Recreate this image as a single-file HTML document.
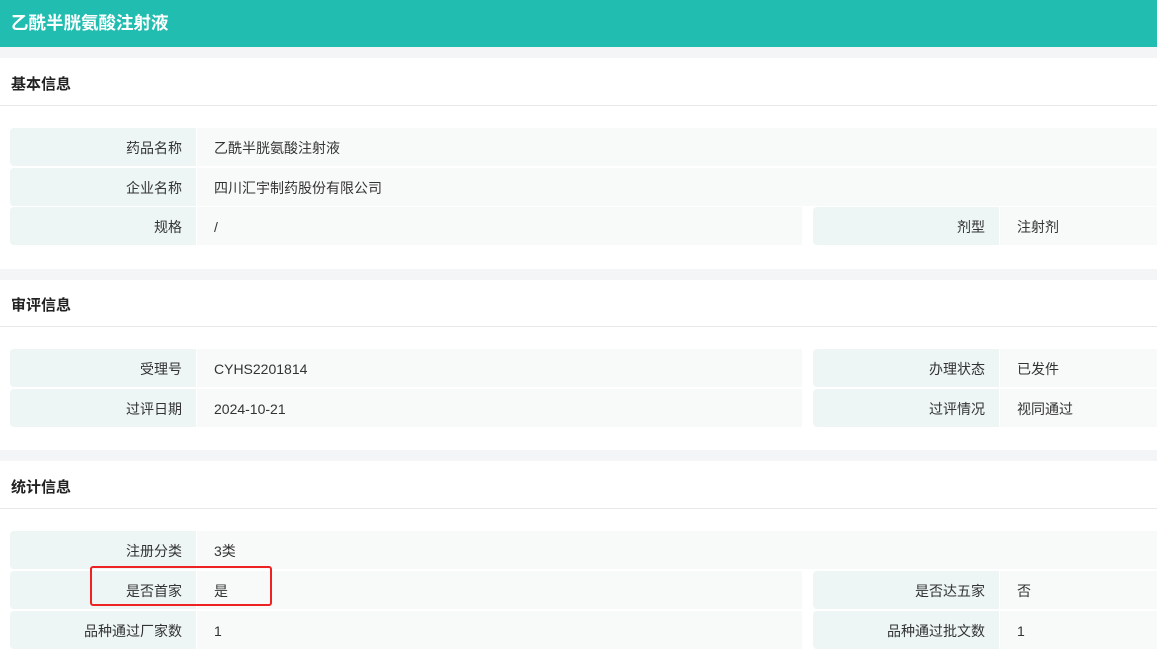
<!DOCTYPE html>
<html><head><meta charset="utf-8"><style>
*{margin:0;padding:0;box-sizing:border-box}
body{width:1157px;height:666px;overflow:hidden;background:#fff;font-family:"Liberation Sans","Noto Sans CJK SC",sans-serif;color:#333;position:relative}
.a{position:absolute}
.hdr{left:0;top:0;width:1157px;height:47px;background:#20bdb0;color:#fff;font-size:17.5px;font-weight:bold;line-height:47px;padding-left:11px}
.gap{left:0;width:1157px;background:#f4f5f7}
.tt{left:11px;font-size:15px;font-weight:bold;color:#222}
.ln{left:0;width:1157px;height:1px;background:#e6e8ea}
.l{background:#edf5f5;border-radius:4px 0 0 4px;font-size:14px;text-align:right;padding-right:14px;height:38px;line-height:41px}
.v{background:#f8fafa;font-size:14px;padding-left:17px;height:38px;line-height:41px}
</style></head><body>
<div class="a hdr">乙酰半胱氨酸注射液</div>
<div class="a gap" style="top:47px;height:11px"></div>
<div class="a tt" style="top:73px">基本信息</div>
<div class="a ln" style="top:105px"></div>
<div class="a l" style="left:10px;top:128px;width:186px">药品名称</div>
<div class="a v" style="left:197px;top:128px;width:960px">乙酰半胱氨酸注射液</div>
<div class="a l" style="left:10px;top:168px;width:186px">企业名称</div>
<div class="a v" style="left:197px;top:168px;width:960px">四川汇宇制药股份有限公司</div>
<div class="a l" style="left:10px;top:207px;width:186px">规格</div>
<div class="a v" style="left:197px;top:207px;width:605px">/</div>
<div class="a l" style="left:813px;top:207px;width:186px">剂型</div>
<div class="a v" style="left:1000px;top:207px;width:157px">注射剂</div>

<div class="a gap" style="top:269px;height:11px"></div>
<div class="a tt" style="top:294px">审评信息</div>
<div class="a ln" style="top:326px"></div>
<div class="a l" style="left:10px;top:349px;width:186px">受理号</div>
<div class="a v" style="left:197px;top:349px;width:605px">CYHS2201814</div>
<div class="a l" style="left:813px;top:349px;width:186px">办理状态</div>
<div class="a v" style="left:1000px;top:349px;width:157px">已发件</div>
<div class="a l" style="left:10px;top:389px;width:186px">过评日期</div>
<div class="a v" style="left:197px;top:389px;width:605px">2024-10-21</div>
<div class="a l" style="left:813px;top:389px;width:186px">过评情况</div>
<div class="a v" style="left:1000px;top:389px;width:157px">视同通过</div>

<div class="a gap" style="top:450px;height:11px"></div>
<div class="a tt" style="top:476px">统计信息</div>
<div class="a ln" style="top:508px"></div>
<div class="a l" style="left:10px;top:531px;width:186px">注册分类</div>
<div class="a v" style="left:197px;top:531px;width:960px">3类</div>
<div class="a l" style="left:10px;top:571px;width:186px">是否首家</div>
<div class="a v" style="left:197px;top:571px;width:605px">是</div>
<div class="a l" style="left:813px;top:571px;width:186px">是否达五家</div>
<div class="a v" style="left:1000px;top:571px;width:157px">否</div>
<div class="a l" style="left:10px;top:611px;width:186px">品种通过厂家数</div>
<div class="a v" style="left:197px;top:611px;width:605px">1</div>
<div class="a l" style="left:813px;top:611px;width:186px">品种通过批文数</div>
<div class="a v" style="left:1000px;top:611px;width:157px">1</div>
<div class="a" style="left:90px;top:566px;width:182px;height:40px;border:2px solid #ee2222;border-radius:3px"></div>
</body></html>
